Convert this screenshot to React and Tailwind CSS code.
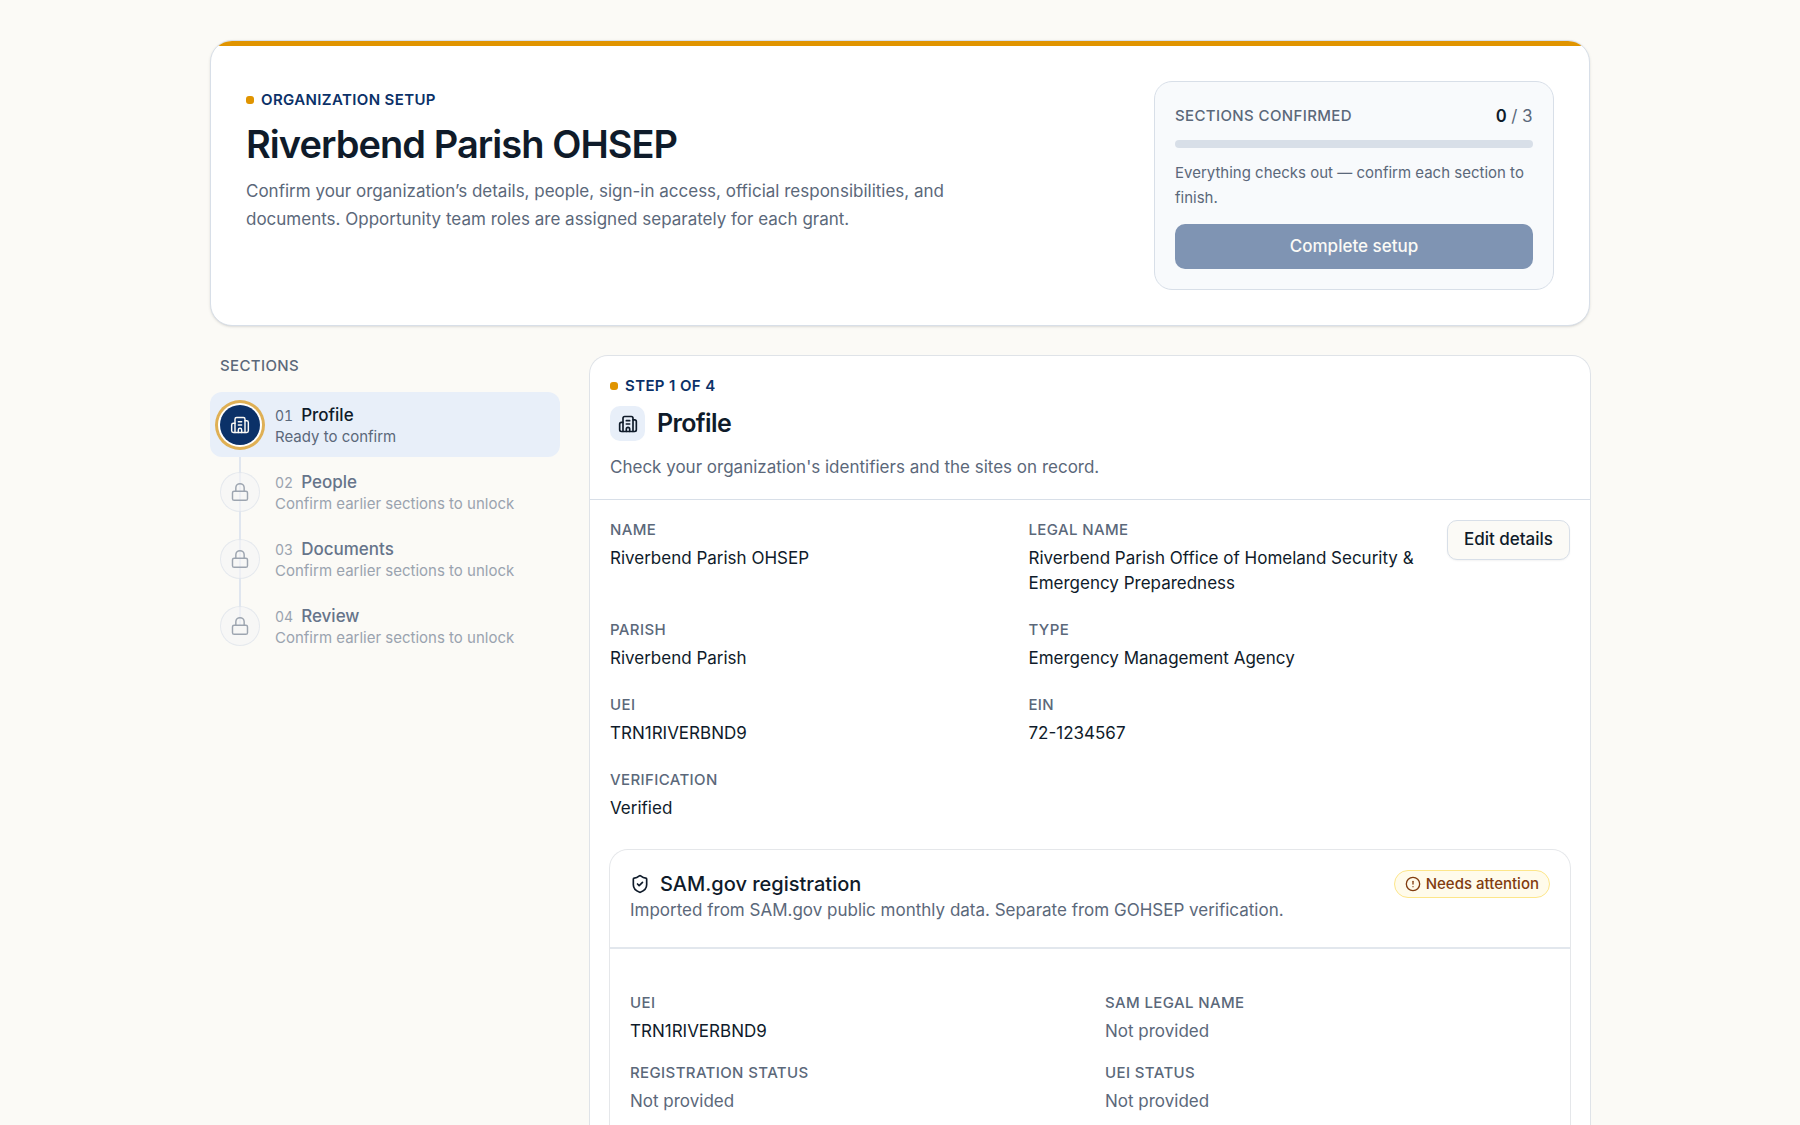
import React from 'react';
import { Building2, CircleAlert, Lock, ShieldCheck } from 'lucide-react';

const sections = [
  { id: 'profile', number: '01', label: 'Profile', hint: 'Ready to confirm', active: true },
  { id: 'people', number: '02', label: 'People', hint: 'Confirm earlier sections to unlock' },
  { id: 'documents', number: '03', label: 'Documents', hint: 'Confirm earlier sections to unlock' },
  { id: 'review', number: '04', label: 'Review', hint: 'Confirm earlier sections to unlock' },
];

const profileFields = [
  { label: 'Name', value: 'Riverbend Parish OHSEP' },
  { label: 'Legal name', value: 'Riverbend Parish Office of Homeland Security & Emergency Preparedness' },
  { label: 'Parish', value: 'Riverbend Parish' },
  { label: 'Type', value: 'Emergency Management Agency' },
  { label: 'UEI', value: 'TRN1RIVERBND9' },
  { label: 'EIN', value: '72-1234567' },
  { label: 'Verification', value: 'Verified' },
];

const samFields = [
  { label: 'UEI', value: 'TRN1RIVERBND9' },
  { label: 'SAM legal name' },
  { label: 'Registration status' },
  { label: 'UEI status' },
];

function Eyebrow({ children }) {
  return (
    <p className="flex items-center gap-[7px] text-[15px] leading-5 font-semibold uppercase tracking-wide text-[#0b3168]">
      <span className="size-2 rounded-[3px] bg-[#e09400]" />
      {children}
    </p>
  );
}

function Field({ label, value }) {
  return (
    <div className="min-w-0">
      <dt className="text-[15px] leading-5 font-medium uppercase tracking-wide text-[#5b687a]">{label}</dt>
      <dd className={`mt-1.5 text-[17px] leading-[25px] ${value ? 'text-[#0f1b2a]' : 'text-[#5b687a]'}`}>
        {value || 'Not provided'}
      </dd>
    </div>
  );
}

function SetupHeader() {
  return (
    <header className="overflow-hidden rounded-[22px] border border-[#d8dfe8] bg-white shadow-sm">
      <div className="h-[5px] bg-[#e09400]" />
      <div className="flex items-start justify-between gap-8 p-[35px]">
        <div className="max-w-[760px] pt-[9px]">
          <Eyebrow>Organization setup</Eyebrow>
          <h1 className="mt-3 text-[38px] leading-[45px] font-semibold tracking-tight text-[#0f1b2a]">
            Riverbend Parish OHSEP
          </h1>
          <p className="mt-2.5 text-[17px] leading-7 text-[#5b687a]">
            Confirm your organization’s details, people, sign-in access, official responsibilities, and documents.
            Opportunity team roles are assigned separately for each grant.
          </p>
        </div>

        <div className="w-[400px] shrink-0 rounded-[18px] border border-[#d8dfe8] bg-[#f8fafc] p-5">
          <div className="flex items-center justify-between leading-7 text-[#5b687a]">
            <span id="confirmed-label" className="text-[15px] font-medium uppercase tracking-wide">
              Sections confirmed
            </span>
            <span className="text-[17px] tabular-nums">
              <span className="font-semibold text-[#0f1b2a]">0</span> / 3
            </span>
          </div>
          <div
            role="progressbar"
            aria-labelledby="confirmed-label"
            aria-valuenow={0}
            aria-valuemin={0}
            aria-valuemax={3}
            className="mt-2.5 h-2 rounded-full bg-[#d8dfe8]"
          />
          <p className="mt-3 text-[15px] leading-[25px] text-[#5b687a]">
            Everything checks out — confirm each section to finish.
          </p>
          <button
            type="button"
            disabled
            className="mt-3.5 h-[45px] w-full rounded-[10px] bg-[#7f94b3] text-[17px] font-medium text-[#fbfaf6]"
          >
            Complete setup
          </button>
        </div>
      </div>
    </header>
  );
}

function SectionNav() {
  return (
    <nav aria-labelledby="sections-label" className="w-[350px] shrink-0">
      <h2 id="sections-label" className="px-2.5 text-[15px] leading-5 font-medium uppercase tracking-wide text-[#5b687a]">
        Sections
      </h2>
      <ol className="relative mt-4 flex flex-col gap-0.5">
        {/* Connector that runs through the step markers */}
        <li aria-hidden="true" className="absolute top-8 bottom-8 left-[29px] w-0.5 bg-[#e0e6ef]" />
        {sections.map(({ id, number, label, hint, active }) => (
          <li key={id} className="relative">
            <button
              type="button"
              disabled={!active}
              className={`flex h-[65px] w-full items-center gap-[15px] rounded-xl px-2.5 text-left ${active ? 'bg-[#e8eff9]' : ''}`}
            >
              {active ? (
                <span className="flex size-10 items-center justify-center rounded-full bg-[#0b3168] text-[#fbfaf6] ring-3 ring-[#dfb055] ring-offset-2 ring-offset-white">
                  <Building2 className="size-5" strokeWidth={1.75} />
                </span>
              ) : (
                <span className="flex size-10 items-center justify-center rounded-full border border-[#d8dfe8]/60 bg-[#f5f5f6]/60 text-[#9da5b0]">
                  <Lock className="size-5" strokeWidth={1.75} />
                </span>
              )}
              <span>
                <span className="flex items-baseline gap-2 leading-6">
                  <span className={`text-sm tabular-nums ${active ? 'text-[#5b687a]' : 'text-[#9aa3af]'}`}>
                    {number}
                  </span>
                  <span className={`text-[17px] leading-6 font-medium ${active ? 'text-[#0f1b2a]' : 'text-[#66748a]'}`}>
                    {label}
                  </span>
                </span>
                <span className={`block text-[15px] leading-5 ${active ? 'text-[#5b687a]' : 'text-[#9aa3af]'}`}>
                  {hint}
                </span>
              </span>
            </button>
          </li>
        ))}
      </ol>
    </nav>
  );
}

function SamRegistration() {
  return (
    <section className="mt-[29px] rounded-[18px] bg-white ring-1 ring-[#e5e7ea]">
      <div className="flex items-start justify-between gap-5 border-b-2 border-[#e2e7ed] px-5 pt-5 pb-6">
        <div>
          <h3 className="flex items-center gap-2.5 text-xl leading-7 font-medium text-[#0f1b2a]">
            <ShieldCheck className="size-5" strokeWidth={2} />
            SAM.gov registration
          </h3>
          <p className="text-[17px] leading-[25px] text-[#5b687a]">
            Imported from SAM.gov public monthly data. Separate from GOHSEP verification.
          </p>
        </div>
        <span className="flex h-7 shrink-0 items-center gap-[5px] rounded-full border border-[#fde68a] bg-[#fffbeb] px-2.5 text-[15px] font-medium text-[#813c10]">
          <CircleAlert className="size-4" strokeWidth={2} />
          Needs attention
        </span>
      </div>
      <dl className="grid grid-cols-2 gap-x-[30px] gap-y-[19px] px-5 pt-11 pb-12">
        {samFields.map((field) => (
          <Field key={field.label} {...field} />
        ))}
      </dl>
    </section>
  );
}

function ProfileSection() {
  return (
    <main className="min-w-0 flex-1 rounded-[18px] bg-white ring-1 ring-[#dfe3e8]">
      <div className="border-b border-[#d8dfe8] px-5 pt-5 pb-[18px]">
        <Eyebrow>Step 1 of 4</Eyebrow>
        <div className="mt-2.5 flex items-center gap-3">
          <span className="flex size-[35px] items-center justify-center rounded-[10px] bg-[#e8eff9] text-[#0f1b2a]">
            <Building2 className="size-5" strokeWidth={2} />
          </span>
          <h2 className="text-[25px] leading-[35px] font-semibold tracking-tight text-[#0f1b2a]">Profile</h2>
        </div>
        <p className="mt-3 text-[17px] leading-7 text-[#5b687a]">
          Check your organization's identifiers and the sites on record.
        </p>
      </div>
      <div className="p-5">
        <div className="flex items-start gap-5">
          <dl className="grid flex-1 grid-cols-2 gap-x-5 gap-y-6">
            {profileFields.map((field) => (
              <Field key={field.label} {...field} />
            ))}
          </dl>
          <button
            type="button"
            className="h-10 shrink-0 rounded-[10px] border border-[#d8dfe8] bg-[#fbfaf6] px-4 text-[17px] font-medium text-[#0f1b2a] shadow-xs"
          >
            Edit details
          </button>
        </div>
        <SamRegistration />
      </div>
    </main>
  );
}

export default function App() {
  return (
    <div className="min-h-screen bg-[#fbfaf6] font-['Inter',sans-serif] antialiased">
      <div className="mx-auto max-w-[1440px] px-[30px] pt-10">
        <SetupHeader />
        <div className="mt-[30px] flex items-start gap-[30px]">
          <SectionNav />
          <ProfileSection />
        </div>
      </div>
    </div>
  );
}
